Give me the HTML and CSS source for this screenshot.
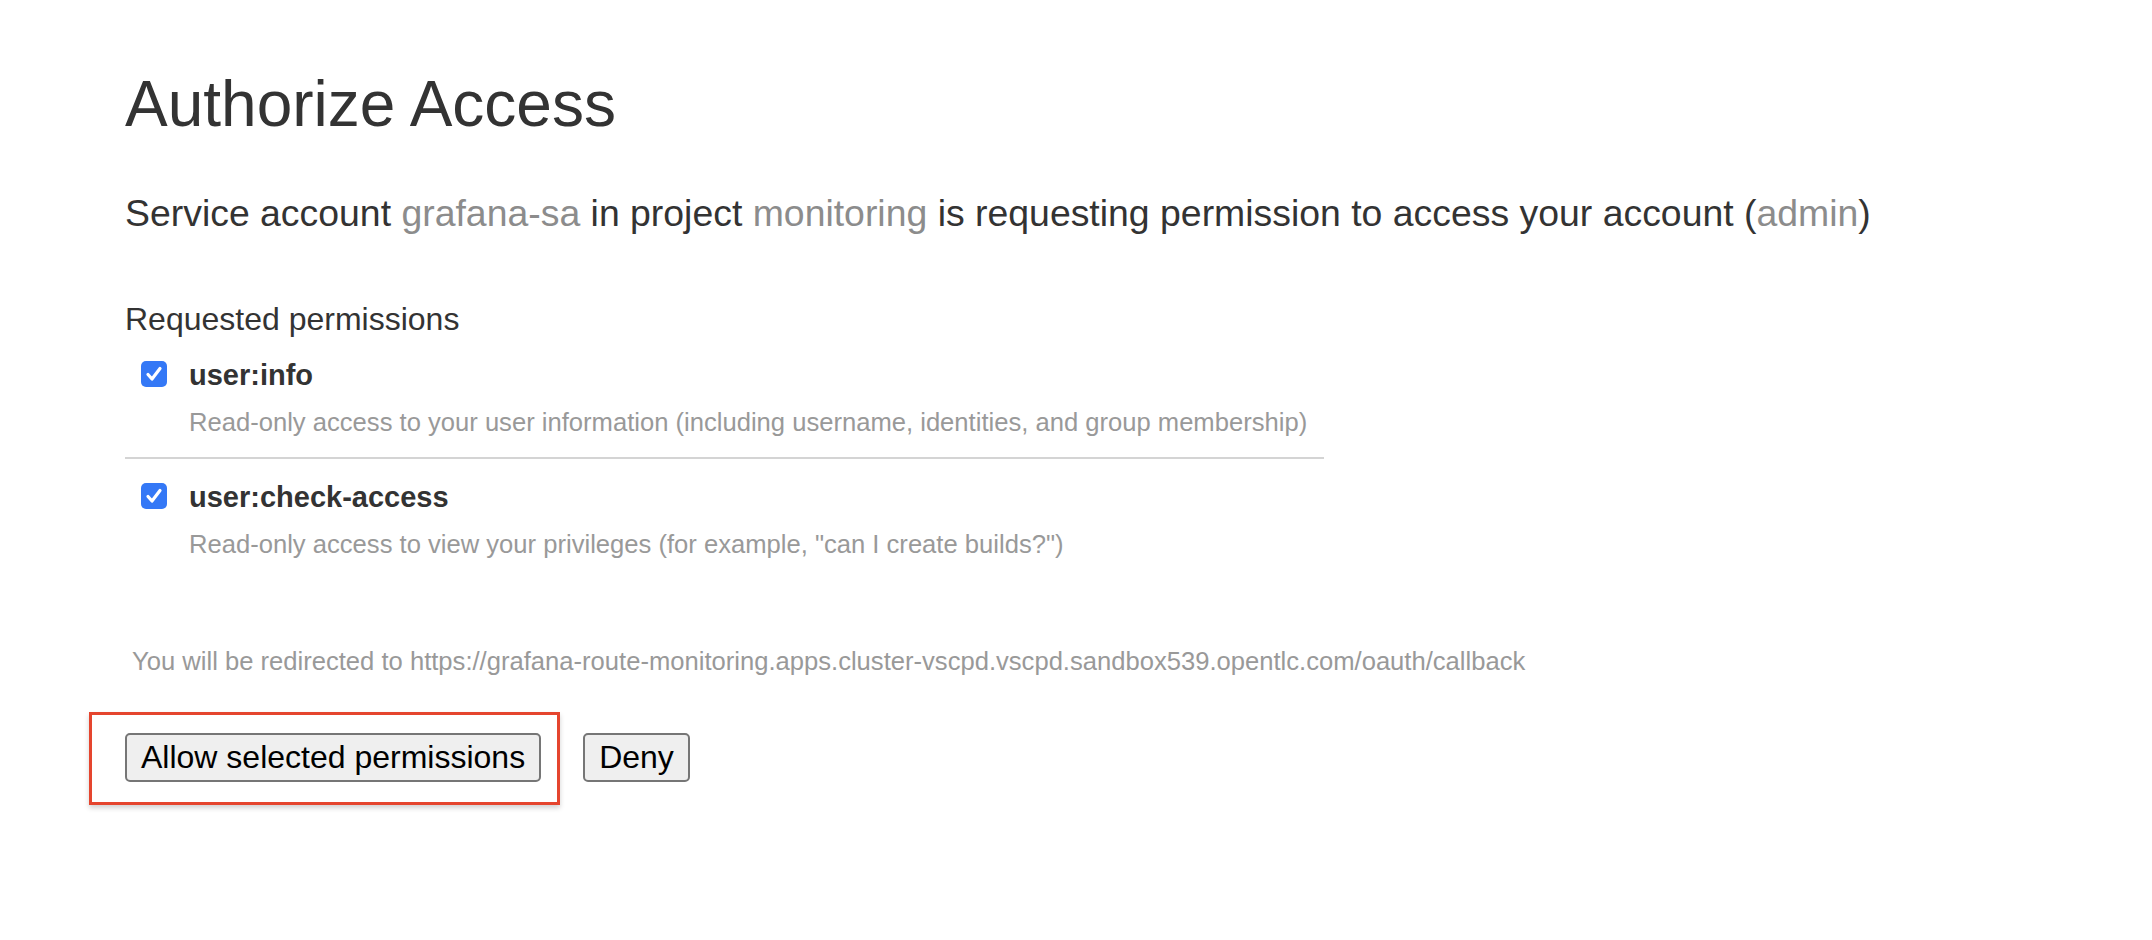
FILE: index.html
```html
<!DOCTYPE html>
<html lang="en">
<head>
<meta charset="utf-8">
<title>Authorize Access</title>
<link rel="stylesheet" href="styles.css">
</head>
<body>
<main class="page">
  <h1 class="title">Authorize Access</h1>
  <p class="lead">Service account <span class="hl">grafana-sa</span> in project <span class="hl">monitoring</span> is requesting permission to access your account (<span class="hl">admin</span>)</p>

  <section class="perms">
    <h2 class="perms-title">Requested permissions</h2>
    <div class="perm-list">
      <div class="perm perm-first">
        <span class="checkbox"><svg viewBox="0 0 26 26" width="26" height="26"><path d="M7 13.5 L11 18 L19 7.5" fill="none" stroke="#fff" stroke-width="3.2" stroke-linecap="round" stroke-linejoin="round"/></svg></span>
        <div class="perm-body">
          <div class="perm-name">user:info</div>
          <div class="perm-desc">Read-only access to your user information (including username, identities, and group membership)</div>
        </div>
      </div>
      <div class="perm">
        <span class="checkbox"><svg viewBox="0 0 26 26" width="26" height="26"><path d="M7 13.5 L11 18 L19 7.5" fill="none" stroke="#fff" stroke-width="3.2" stroke-linecap="round" stroke-linejoin="round"/></svg></span>
        <div class="perm-body">
          <div class="perm-name">user:check-access</div>
          <div class="perm-desc">Read-only access to view your privileges (for example, "can I create builds?")</div>
        </div>
      </div>
    </div>
  </section>

  <p class="redirect">You will be redirected to https://grafana-route-monitoring.apps.cluster-vscpd.vscpd.sandbox539.opentlc.com/oauth/callback</p>

  <div class="actions">
    <span class="marked"><button class="btn" type="button">Allow selected permissions</button></span>
    <button class="btn" type="button">Deny</button>
  </div>
</main>
</body>
</html>
```

FILE: styles.css
```css
html, body {
  margin: 0;
  padding: 0;
  background: #ffffff;
}

body {
  font-family: "Liberation Sans", Arial, Helvetica, sans-serif;
  color: #333333;
  min-height: 940px;
}

.page {
  padding: 72px 0 120px 125px;
}

.title {
  margin: 0;
  font-size: 64px;
  line-height: 64px;
  font-weight: normal;
  color: #333333;
}

.lead {
  margin: 55px 0 0 0;
  font-size: 37.4px;
  line-height: 44px;
  color: #333333;
  white-space: nowrap;
}

.hl {
  color: #8c8c8c;
}

.perms {
  margin-top: 64px;
}

.perms-title {
  margin: 0;
  font-size: 32px;
  line-height: 40px;
  font-weight: normal;
  color: #333333;
}

.perm-list {
  width: 1199px;
  margin-top: 18px;
}

.perm {
  display: flex;
  align-items: flex-start;
  gap: 22px;
  padding-left: 16px;
}

.perm-first {
  padding-bottom: 19px;
  border-bottom: 2px solid #d4d4d4;
}

.perm + .perm {
  padding-top: 20px;
}

.checkbox {
  flex: 0 0 26px;
  width: 26px;
  height: 26px;
  margin-top: 4px;
  border-radius: 5px;
  background: #3478f6;
  display: flex;
}

.perm-name {
  font-size: 29px;
  line-height: 36px;
  font-weight: bold;
  color: #333333;
}

.perm-desc {
  margin-top: 13px;
  font-size: 25.6px;
  line-height: 32px;
  color: #999999;
  white-space: nowrap;
}

.redirect {
  margin: 85px 0 0 0;
  padding-left: 7px;
  font-size: 25.6px;
  line-height: 32px;
  color: #999999;
  white-space: nowrap;
}

.actions {
  margin-top: 56px;
  display: flex;
  align-items: flex-start;
  gap: 42px;
}

.marked {
  position: relative;
  display: inline-flex;
}

.marked::after {
  content: "";
  position: absolute;
  left: -36px;
  right: -19px;
  top: -21px;
  bottom: -23px;
  border: 3px solid #e5452e;
  box-shadow: 0 3px 5px rgba(0, 0, 0, 0.18);
  pointer-events: none;
}

.btn {
  font-family: "Liberation Sans", Arial, Helvetica, sans-serif;
  font-size: 32px;
  line-height: 45px;
  height: 49px;
  padding: 0 14px;
  color: #000000;
  background: #efefef;
  border: 2px solid #767676;
  border-radius: 5px;
}
```
